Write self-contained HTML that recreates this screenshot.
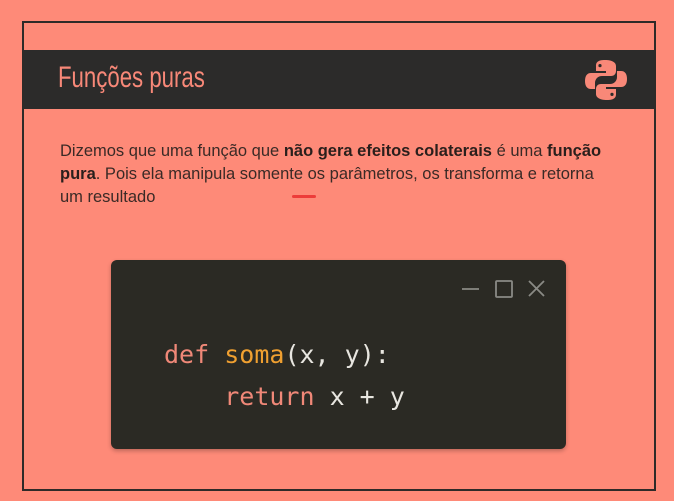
<!DOCTYPE html>
<html><head><meta charset="utf-8"><style>
body{margin:0;width:674px;height:501px;background:#fe8a78;position:relative;overflow:hidden;font-family:"Liberation Sans",sans-serif}
.frame{position:absolute;left:22px;top:21px;width:630px;height:466px;border:2px solid #2e2a28}
.bar{position:absolute;left:24px;top:50px;width:630px;height:59px;background:#2c2b2a}
.title{position:absolute;left:58px;top:61px;color:#f88878;font-family:"Liberation Sans Narrow","Liberation Sans",sans-serif;font-size:30px;transform:scaleX(.74);transform-origin:left}
.txt{position:absolute;left:60px;top:140px;width:550px;font-size:16.5px;line-height:23px;color:#3a2a26}
.txt b{color:#2a1f1c;font-weight:700}
.code{position:absolute;left:111px;top:260px;width:455px;height:189px;background:#2b2a24;border-radius:6px;box-shadow:0 2px 4px rgba(0,0,0,.25)}
pre{position:absolute;left:164px;top:334px;margin:0;font-family:"DejaVu Sans Mono",monospace;font-size:25px;line-height:42px;color:#e8e6e0}
.k{color:#f08878}.f{color:#f0a030}
</style></head><body>
<div class="frame"></div>
<div class="bar"></div>
<div class="title">Funções puras</div>
<svg style="position:absolute;left:584px;top:58px" width="44" height="44" viewBox="0 0 44 44">
<path fill="#f88878" d="M21 2c-8 0-9 3-9 6v5h10v2H7c-4 0-6 3-6 8s2 8 6 8h4v-6c0-4 3-7 7-7h9c3 0 5-2 5-5V8c0-3-3-6-11-6z M16 6a1.6 1.6 0 1 1 0 3.2a1.6 1.6 0 1 1 0-3.2z"/>
<path fill="#f88878" d="M23 42c8 0 9-3 9-6v-5H22v-2h15c4 0 6-3 6-8s-2-8-6-8h-4v6c0 4-3 7-7 7h-9c-3 0-5 2-5 5v5c0 3 3 6 11 6z M28 38a1.6 1.6 0 1 1 0-3.2a1.6 1.6 0 1 1 0 3.2z"/>
</svg>
<div class="txt">Dizemos que uma função que <b>não gera efeitos colaterais</b> é uma <b>função pura</b>. Pois ela manipula somente os parâmetros, os transforma e retorna um resultado</div>
<div style="position:absolute;left:292px;top:195px;width:24px;height:3px;background:#e8282a;border-radius:2px;opacity:.8"></div>
<div class="code"></div>
<svg style="position:absolute;left:460px;top:280px" width="90" height="20" viewBox="0 0 90 20">
<g stroke="#8a8a85" stroke-width="1.8" fill="none"><path d="M2 9h17"/><rect x="36" y="1" width="16" height="16" rx="1"/><path d="M69 1l15 15M84 1L69 16"/></g></svg>
<pre><span class="k">def</span> <span class="f">soma</span>(x, y):
    <span class="k">return</span> x + y</pre>
</body></html>
